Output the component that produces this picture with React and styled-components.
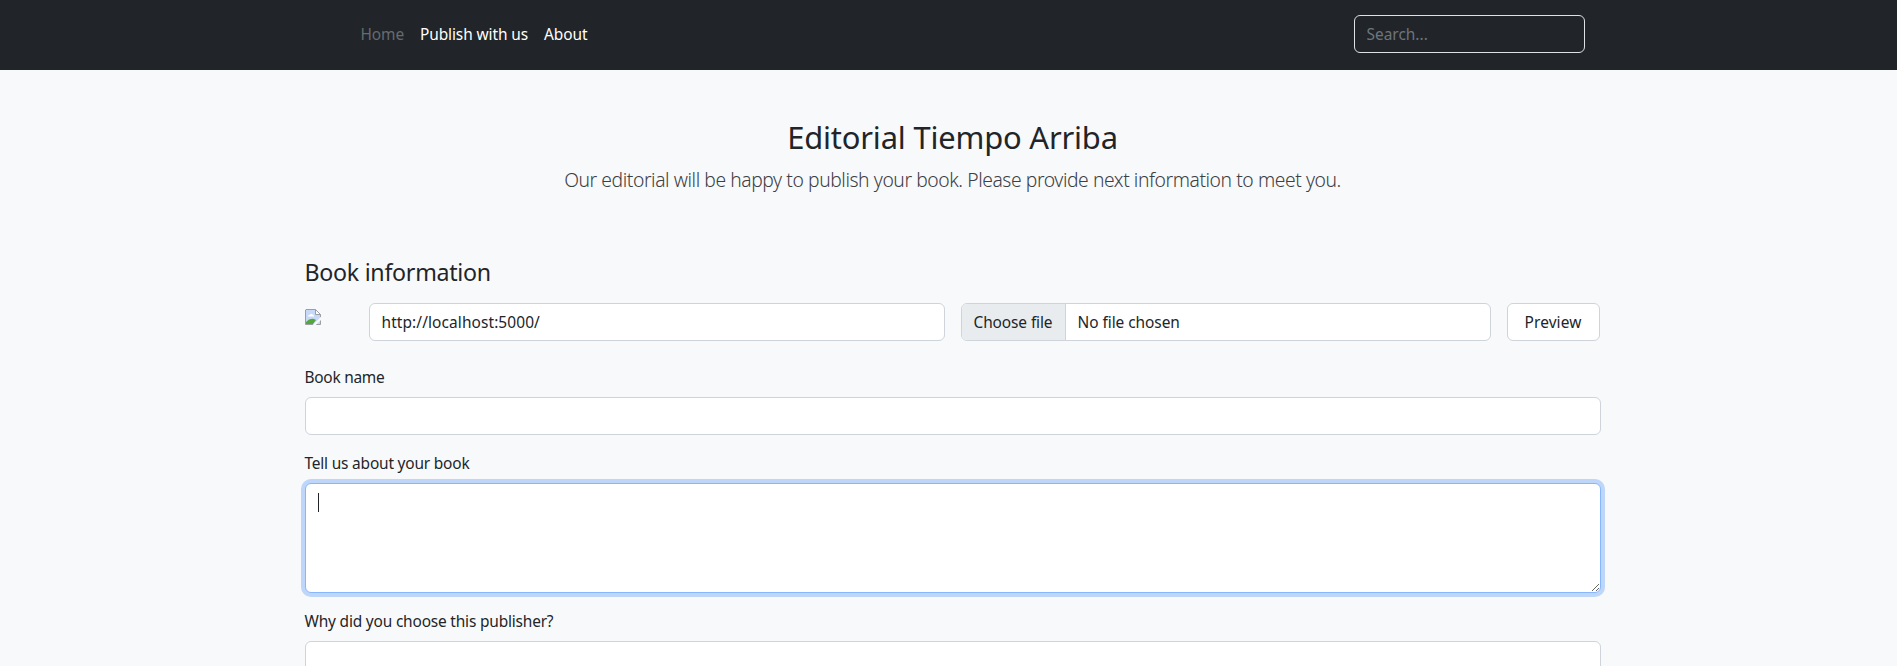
import React from 'react';
import styled, { createGlobalStyle, css } from 'styled-components';

const GlobalStyle = createGlobalStyle`
  *, *::before, *::after { box-sizing: border-box; }
  html { overflow: hidden; background: #f8f9fa; }
  body {
    margin: 0;
    width: 1905px;
    height: 666px;
    overflow: hidden;
    background: #f8f9fa;
    color: #212529;
    font-family: "Noto Sans", "Open Sans", sans-serif;
    font-size: 15.44px;
    line-height: 24px;
  }
`;

const Text = styled.span`
  white-space: nowrap;
  letter-spacing: ${(p) => p.$spacing || 0}px;
`;

const Container = styled.div`
  width: 1320px;
  margin: 0 auto;
  padding: 0 12px;
`;

const Header = styled.header`
  height: 70px;
  background: #212529;
`;

const HeaderInner = styled(Container)`
  height: 100%;
  padding: 0 28px 2px 60px;
  display: flex;
  align-items: center;
  justify-content: space-between;
`;

const Nav = styled.nav`
  display: flex;
`;

const NavLink = styled.a`
  padding: 8px;
  color: ${(p) => (p.$active ? '#656b71' : '#fff')};
  text-decoration: none;
  letter-spacing: ${(p) => p.$spacing}px;
  white-space: nowrap;
`;

const control = css`
  display: block;
  height: 38px;
  border: 1px solid #ced4da;
  border-radius: 6px;
  background: #fff;
  color: #212529;
  font: inherit;
  padding: 6px 12px;
  outline: none;
`;

const Input = styled.input`
  ${control}
  width: 100%;
  letter-spacing: ${(p) => p.$spacing || 0}px;
`;

const SearchInput = styled.input`
  ${control}
  width: 231px;
  border-color: #dee2e6;
  background: #212529;
  &::placeholder { color: #6c757d; opacity: 1; }
`;

const Page = styled(Container)`
  height: 596px;
  overflow: hidden;
`;

const Intro = styled.section`
  padding: 48px 0;
  text-align: center;
`;

const Title = styled.h2`
  margin: 0 0 9px;
  font-size: 30.9px;
  font-weight: 400;
  line-height: 38.4px;
  letter-spacing: -0.18px;
`;

const Lead = styled.p`
  margin: 0 0 15px;
  color: #3b4045;
  font-size: 19.3px;
  font-weight: 300;
  line-height: 30px;
  letter-spacing: -0.42px;
`;

const SectionTitle = styled.h4`
  margin: 0 0 16px;
  font-size: 23.2px;
  font-weight: 400;
  line-height: 28.8px;
  letter-spacing: -0.28px;
`;

const CoverRow = styled.div`
  display: grid;
  grid-template-columns: 48px 576px 530px 93px;
  column-gap: 16px;
  margin-bottom: 24px;
`;

const CoverImage = styled.svg`
  display: block;
  margin-top: 6px;
`;

const FilePicker = styled.label`
  ${control}
  display: flex;
  padding: 0;
  overflow: hidden;
`;

const FileButton = styled.span`
  padding: 6px 12px;
  width: 104px;
  background: #e9ecef;
  border-right: 1px solid #ced4da;
`;

const FileName = styled.span`
  padding: 6px 12px;
`;

const Button = styled.button`
  ${control}
  padding: 0;
  text-align: center;
`;

const Field = styled.div`
  margin-bottom: 16px;
`;

const Label = styled.label`
  display: block;
  margin-bottom: 8px;
`;

const AreaWrap = styled.div`
  position: relative;
`;

const TextArea = styled.textarea`
  ${control}
  width: 100%;
  height: 110px;
  resize: vertical;
  caret-color: transparent;
  ${(p) =>
    p.$focused &&
    css`
      border-color: #86b7fe;
      box-shadow: 0 0 0 4px rgba(13, 110, 253, 0.25);
    `}
`;

const Caret = styled.span`
  position: absolute;
  left: 13px;
  top: 10px;
  width: 1px;
  height: 19px;
  background: #212529;
`;

function MissingImage() {
  return (
    <CoverImage width="16" height="16" viewBox="0 0 16 16">
      <path d="M1 .5h9.5l5 5v10H.5V1z" fill="#c8d8f8" />
      <path d="M1 15V13Q6 7.5 11 11L8 15z" fill="#55a63f" />
      <path d="M3 7.5Q3 5.5 5 5.7Q6 3.8 7.6 5.5Q9 5.7 9 7.5z" fill="#fff" />
      <path d="M10.5.8V5.5h4.8z" fill="#fff" />
      <path d="M.5 15.5V1L1 .5h9.5l5 5v3" fill="none" stroke="#9b9fa5" />
      <path d="M10.5.5v5h5" fill="none" stroke="#9b9fa5" />
      <path d="M.5 15.5h15v-5" fill="none" stroke="#9b9fa5" />
      <path d="M16 7.8 7.6 16H10.8L16 11z" fill="#f8f9fa" />
    </CoverImage>
  );
}

export default function App() {
  return (
    <>
      <GlobalStyle />
      <Header>
        <HeaderInner>
          <Nav>
            <NavLink $active $spacing={-0.1}>Home</NavLink>
            <NavLink $spacing={-0.1}>Publish with us</NavLink>
            <NavLink $spacing={-0.05}>About</NavLink>
          </Nav>
          <SearchInput placeholder="Search..." />
        </HeaderInner>
      </Header>
      <Page as="main">
        <Intro>
          <Title>Editorial Tiempo Arriba</Title>
          <Lead>
            Our editorial will be happy to publish your book. Please provide next information to meet you.
          </Lead>
        </Intro>
        <SectionTitle>Book information</SectionTitle>
        <CoverRow>
          <MissingImage />
          <Input defaultValue="http://localhost:5000/" $spacing={0.1} />
          <FilePicker>
            <FileButton>
              <Text $spacing={-0.1}>Choose file</Text>
            </FileButton>
            <FileName>
              <Text $spacing={-0.05}>No file chosen</Text>
            </FileName>
          </FilePicker>
          <Button>
            <Text $spacing={0.1}>Preview</Text>
          </Button>
        </CoverRow>
        <Field>
          <Label><Text $spacing={-0.26}>Book name</Text></Label>
          <Input />
        </Field>
        <Field>
          <Label><Text $spacing={-0.19}>Tell us about your book</Text></Label>
          <AreaWrap>
            <TextArea $focused />
            <Caret />
          </AreaWrap>
        </Field>
        <Field>
          <Label><Text $spacing={-0.18}>Why did you choose this publisher?</Text></Label>
          <TextArea />
        </Field>
      </Page>
    </>
  );
}
